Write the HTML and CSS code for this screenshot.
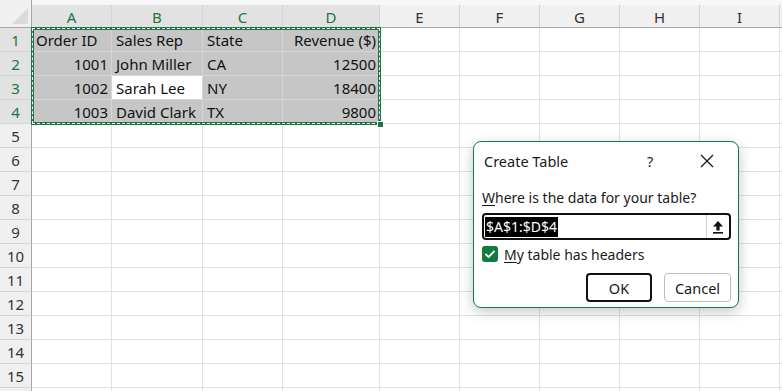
FILE: index.html
```html
<!DOCTYPE html>
<html>
<head>
<meta charset="utf-8">
<link rel="stylesheet" href="styles.css">
</head>
<body>
<div class="sheet">
  <div class="topstrip"></div>
  <div class="grid">
    <div class="corner"></div>
    <div class="ch selh">A</div><div class="ch selh">B</div><div class="ch selh">C</div><div class="ch selh">D</div><div class="ch">E</div><div class="ch">F</div><div class="ch">G</div><div class="ch">H</div><div class="ch">I</div><div class="ch end"></div>

    <div class="rh selh">1</div><div class="c sel">Order ID</div><div class="c sel">Sales Rep</div><div class="c sel">State</div><div class="c sel num">Revenue ($)</div><div class="c"></div><div class="c"></div><div class="c"></div><div class="c"></div><div class="c"></div><div class="c end"></div>
    <div class="rh selh">2</div><div class="c sel num">1001</div><div class="c sel">John Miller</div><div class="c sel">CA</div><div class="c sel num">12500</div><div class="c"></div><div class="c"></div><div class="c"></div><div class="c"></div><div class="c"></div><div class="c end"></div>
    <div class="rh selh">3</div><div class="c sel num">1002</div><div class="c active">Sarah Lee</div><div class="c sel">NY</div><div class="c sel num">18400</div><div class="c"></div><div class="c"></div><div class="c"></div><div class="c"></div><div class="c"></div><div class="c end"></div>
    <div class="rh selh">4</div><div class="c sel num">1003</div><div class="c sel">David Clark</div><div class="c sel">TX</div><div class="c sel num">9800</div><div class="c"></div><div class="c"></div><div class="c"></div><div class="c"></div><div class="c"></div><div class="c end"></div>
    <div class="rh">5</div><div class="c"></div><div class="c"></div><div class="c"></div><div class="c"></div><div class="c"></div><div class="c"></div><div class="c"></div><div class="c"></div><div class="c"></div><div class="c end"></div>
    <div class="rh">6</div><div class="c"></div><div class="c"></div><div class="c"></div><div class="c"></div><div class="c"></div><div class="c"></div><div class="c"></div><div class="c"></div><div class="c"></div><div class="c end"></div>
    <div class="rh">7</div><div class="c"></div><div class="c"></div><div class="c"></div><div class="c"></div><div class="c"></div><div class="c"></div><div class="c"></div><div class="c"></div><div class="c"></div><div class="c end"></div>
    <div class="rh">8</div><div class="c"></div><div class="c"></div><div class="c"></div><div class="c"></div><div class="c"></div><div class="c"></div><div class="c"></div><div class="c"></div><div class="c"></div><div class="c end"></div>
    <div class="rh">9</div><div class="c"></div><div class="c"></div><div class="c"></div><div class="c"></div><div class="c"></div><div class="c"></div><div class="c"></div><div class="c"></div><div class="c"></div><div class="c end"></div>
    <div class="rh">10</div><div class="c"></div><div class="c"></div><div class="c"></div><div class="c"></div><div class="c"></div><div class="c"></div><div class="c"></div><div class="c"></div><div class="c"></div><div class="c end"></div>
    <div class="rh">11</div><div class="c"></div><div class="c"></div><div class="c"></div><div class="c"></div><div class="c"></div><div class="c"></div><div class="c"></div><div class="c"></div><div class="c"></div><div class="c end"></div>
    <div class="rh">12</div><div class="c"></div><div class="c"></div><div class="c"></div><div class="c"></div><div class="c"></div><div class="c"></div><div class="c"></div><div class="c"></div><div class="c"></div><div class="c end"></div>
    <div class="rh">13</div><div class="c"></div><div class="c"></div><div class="c"></div><div class="c"></div><div class="c"></div><div class="c"></div><div class="c"></div><div class="c"></div><div class="c"></div><div class="c end"></div>
    <div class="rh">14</div><div class="c"></div><div class="c"></div><div class="c"></div><div class="c"></div><div class="c"></div><div class="c"></div><div class="c"></div><div class="c"></div><div class="c"></div><div class="c end"></div>
    <div class="rh">15</div><div class="c"></div><div class="c"></div><div class="c"></div><div class="c"></div><div class="c"></div><div class="c"></div><div class="c"></div><div class="c"></div><div class="c"></div><div class="c end"></div>
    <div class="rh"></div><div class="c"></div><div class="c"></div><div class="c"></div><div class="c"></div><div class="c"></div><div class="c"></div><div class="c"></div><div class="c"></div><div class="c"></div><div class="c end"></div>
  </div>

  <div class="ants"><div class="handle"></div></div>

  <div class="dialog">
    <div class="dlg-title">
      <span class="dlg-name">Create Table</span>
      <span class="dlg-help">?</span>
      <svg class="dlg-close" width="14" height="14" viewBox="0 0 14 14"><path d="M1 1L13 13M13 1L1 13" stroke="#1a1a1a" stroke-width="1.3" fill="none"/></svg>
    </div>
    <div class="dlg-body">
      <div class="dlg-label"><u>W</u>here is the data for your table?</div>
      <div class="range">
        <span class="range-text"><span class="range-sel">$A$1:$D$4</span></span>
        <span class="range-btn">
          <svg width="12" height="14" viewBox="0 0 12 14"><path d="M6 1L11 6.5H7.6V10.5H4.4V6.5H1Z" fill="#111"/><rect x="1" y="12" width="10" height="1.6" fill="#111"/></svg>
        </span>
      </div>
      <div class="check-row">
        <span class="checkbox"><svg width="12" height="10" viewBox="0 0 12 10"><path d="M1.5 5L4.6 8L10.5 2" stroke="#fff" stroke-width="1.8" fill="none"/></svg></span>
        <span class="check-label"><u>M</u>y table has headers</span>
      </div>
      <div class="buttons">
        <span class="btn btn-ok">OK</span>
        <span class="btn btn-cancel">Cancel</span>
      </div>
    </div>
  </div>
</div>
</body>
</html>
```

FILE: styles.css
```css
* { box-sizing: border-box; }
html, body { margin: 0; padding: 0; }
body {
  width: 782px;
  height: 391px;
  overflow: hidden;
  background: #ffffff;
  font-family: "Noto Sans", "Open Sans", sans-serif;
}
.sheet {
  position: relative;
  width: 782px;
  height: 391px;
  overflow: hidden;
}
.topstrip {
  height: 5px;
  background: #f7f7f7;
}
.grid {
  display: grid;
  grid-template-columns: 32px 80px 91px 80px 97px 80px 80px 80px 80px 80px 2px;
  grid-template-rows: 23px repeat(16, 24px);
}
.corner {
  background: #f0f0f0;
  border-right: 1px solid #a6a6a6;
  border-bottom: 1px solid #a6a6a6;
  position: relative;
  margin-top: -5px;
  height: 28px;
}
.corner::after {
  content: "";
  position: absolute;
  right: 3px;
  bottom: 3px;
  width: 16px;
  height: 16px;
  background: #dadada;
  clip-path: polygon(100% 0, 100% 100%, 0 100%);
}
.ch {
  background: #f0f0f0;
  border-right: 1px solid #d4d4d4;
  border-bottom: 1px solid #a6a6a6;
  color: #333333;
  font-size: 15px;
  display: flex;
  align-items: center;
  justify-content: center;
  padding-top: 1px;
}
.rh {
  background: #f0f0f0;
  border-right: 1px solid #a6a6a6;
  border-bottom: 1px solid #d4d4d4;
  color: #333333;
  font-size: 15px;
  display: flex;
  align-items: center;
  justify-content: center;
  padding-top: 1px;
}
.selh {
  background: #e2e2e2;
  color: #217346;
}
.c {
  border-right: 1px solid #e1e1e1;
  border-bottom: 1px solid #e1e1e1;
  font-size: 15px;
  color: #111111;
  display: flex;
  align-items: center;
  padding: 1px 3px 0 4px;
  white-space: nowrap;
}
.c.end, .ch.end { border-right: none; }
.sel {
  background: #c6c6c6;
  border-right-color: #d6d6d6;
  border-bottom-color: #d6d6d6;
}
.active {
  background: #ffffff;
  border-right-color: #d6d6d6;
  border-bottom-color: #d6d6d6;
}
.num { justify-content: flex-end; }

.ants {
  position: absolute;
  left: 31px;
  top: 27px;
  width: 350px;
  height: 98px;
  border: 3px solid #217346;
}
.ants::before {
  content: "";
  position: absolute;
  left: -2px;
  top: -2px;
  right: -2px;
  bottom: -2px;
  border: 1px dashed #ffffff;
}
.handle {
  position: absolute;
  right: -6px;
  bottom: -6px;
  width: 7px;
  height: 7px;
  background: #217346;
  border: 1px solid #ffffff;
}

.dialog {
  position: absolute;
  left: 473px;
  top: 141px;
  width: 266px;
  height: 167px;
  background: #ffffff;
  border: 1px solid #107c41;
  border-radius: 8px;
  box-shadow: 0 4px 14px rgba(0, 0, 0, 0.22);
  display: flex;
  flex-direction: column;
  color: #1a1a1a;
}
.dlg-title {
  height: 37px;
  display: flex;
  align-items: center;
  padding-left: 10px;
  font-size: 14.5px;
}
.dlg-name { flex: 1; }
.dlg-help { width: 16px; margin-right: 37px; }
.dlg-close { margin-right: 24px; }
.dlg-body {
  padding: 10px 7px 0 8px;
  display: flex;
  flex-direction: column;
}
.dlg-label {
  font-size: 14px;
  line-height: 18px;
  height: 18px;
}
.dlg-label u, .check-label u { text-decoration-thickness: 1px; text-underline-offset: 2px; }
.range {
  margin-top: 6px;
  height: 27px;
  border: 2px solid #111111;
  border-radius: 4px;
  display: flex;
  align-items: stretch;
}
.range-text {
  flex: 1;
  display: flex;
  align-items: center;
  padding-left: 1px;
}
.range-sel {
  background: #000000;
  color: #ffffff;
  font-size: 14px;
  line-height: 20px;
  padding: 0 1px;
}
.range-btn {
  width: 23px;
  border-left: 1px solid #cfcfcf;
  display: flex;
  align-items: center;
  justify-content: center;
}
.check-row {
  margin-top: 6px;
  height: 16px;
  display: flex;
  align-items: center;
}
.checkbox {
  width: 16px;
  height: 16px;
  background: #107c41;
  border-radius: 3px;
  display: flex;
  align-items: center;
  justify-content: center;
}
.check-label {
  margin-left: 6px;
  font-size: 14px;
}
.buttons {
  margin-top: 11px;
  display: flex;
  justify-content: flex-end;
  gap: 12px;
}
.btn {
  height: 29px;
  display: flex;
  align-items: center;
  justify-content: center;
  font-size: 14.5px;
  border-radius: 4px;
}
.btn-ok {
  width: 66px;
  border: 2px solid #111111;
}
.btn-cancel {
  width: 67px;
  border: 1px solid #bdbdbd;
}
```
